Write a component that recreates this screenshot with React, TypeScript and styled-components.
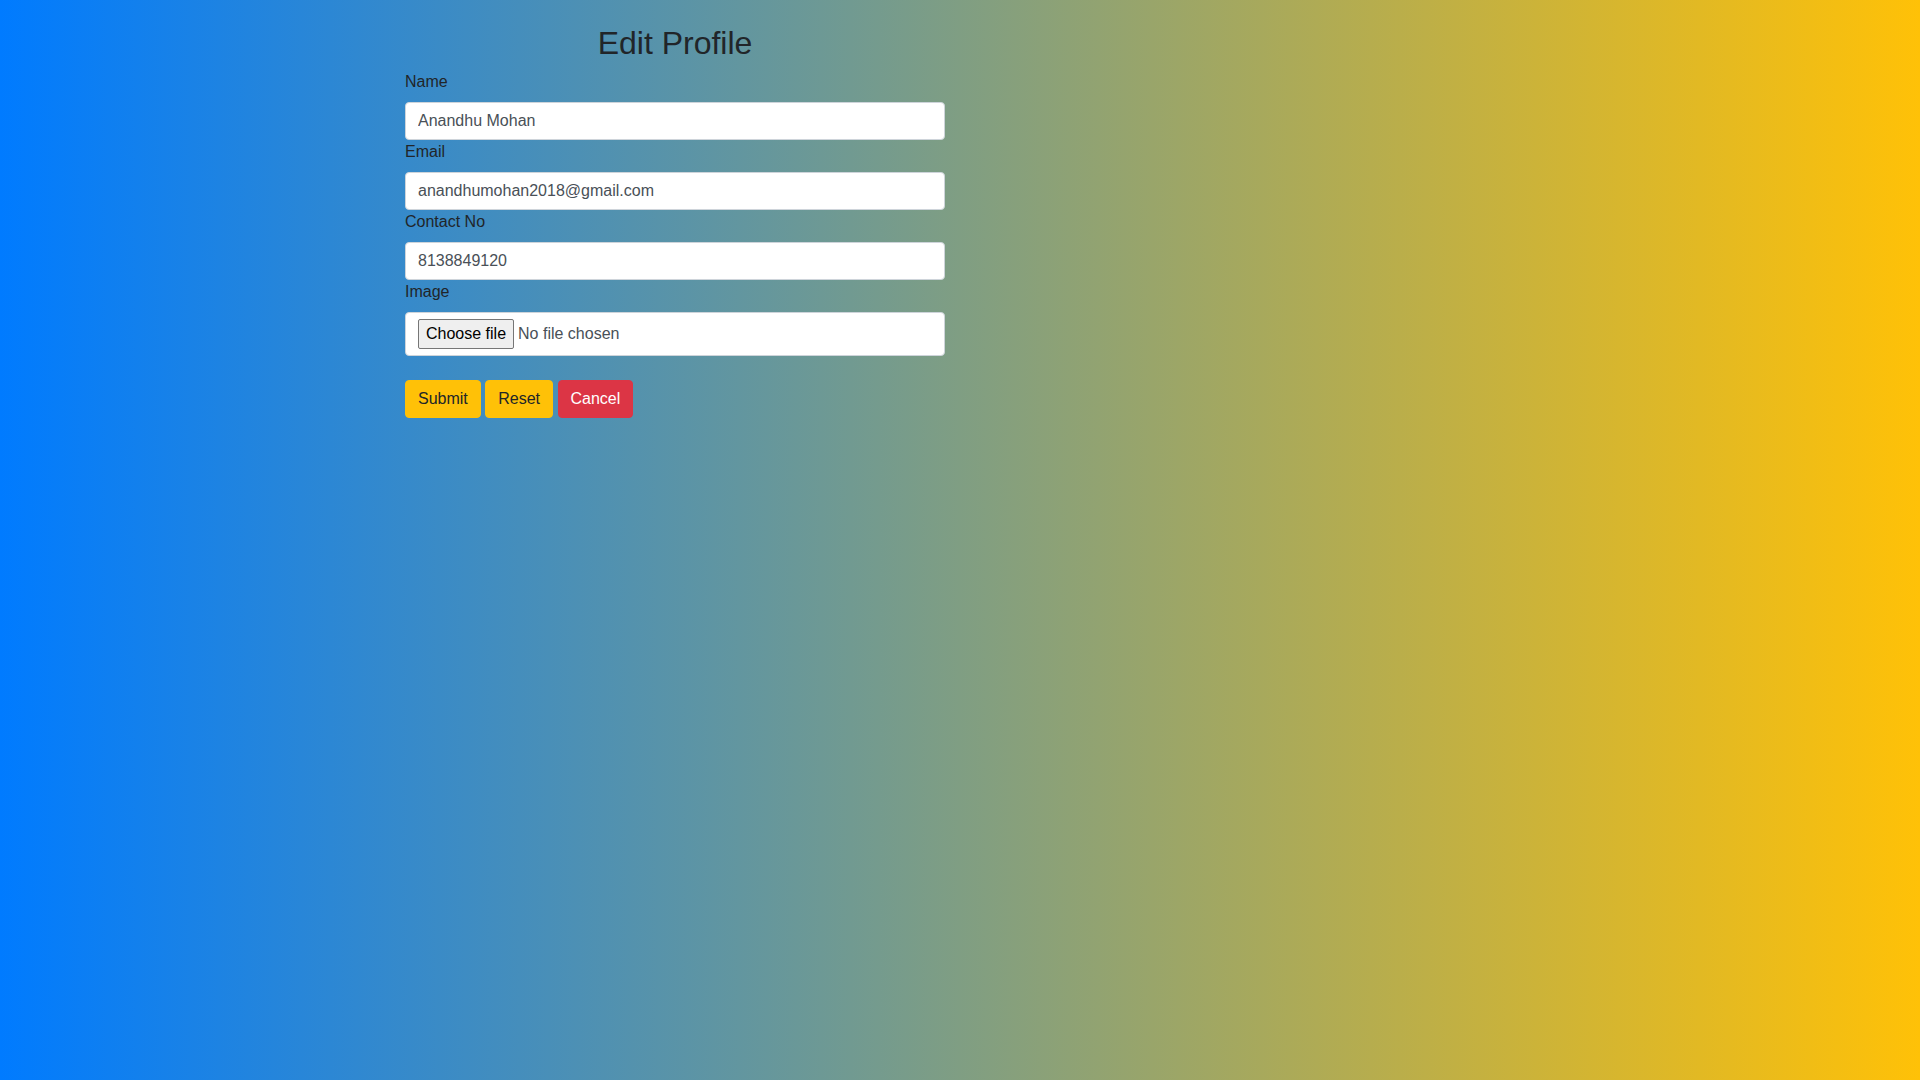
import React, { useState } from "react";
import styled, { createGlobalStyle, css } from "styled-components";

const GlobalStyle = createGlobalStyle`
  *, *::before, *::after { box-sizing: border-box; }
  body {
    margin: 0;
    min-height: 100vh;
    font-family: "Liberation Sans", Arial, sans-serif;
    font-size: 16px;
    line-height: 24px;
    color: #212529;
    background: linear-gradient(to right, #007bff, #ffc107) no-repeat;
  }
`;

const Page = styled.main`
  width: 100%;
  max-width: 1140px;
  margin: 0 auto;
  padding: 24px 15px;
`;

const ProfileForm = styled.form`
  width: 540px;
  max-width: 100%;
`;

const Title = styled.h2`
  margin: 0 0 8px;
  font-size: 32px;
  line-height: 38px;
  font-weight: 500;
  text-align: center;
`;

const Field = styled.div`
  display: flex;
  flex-direction: column;
`;

const Label = styled.label`
  align-self: flex-start;
  margin-bottom: 8px;
`;

const controlStyles = css`
  width: 100%;
  padding: 6px 12px;
  border: 1px solid #ced4da;
  border-radius: 4px;
  background: #fff;
  color: #495057;
  font: inherit;
`;

const TextInput = styled.input`
  ${controlStyles}
`;

const FilePicker = styled.div`
  ${controlStyles}
  position: relative;
  display: flex;
  align-items: center;
  gap: 4px;
`;

/* The native control covers the picker invisibly, so clicks and drops reach it. */
const FileInput = styled.input`
  position: absolute;
  inset: 0;
  width: 100%;
  height: 100%;
  opacity: 0;
`;

const FileButton = styled.span`
  padding: 2px 7px;
  border: 1px solid #767676;
  border-radius: 2px;
  background: #efefef;
  color: #000;

  ${FileInput}:focus-visible ~ & {
    outline: 2px solid #80bdff;
  }
`;

const Actions = styled.div`
  margin-top: 24px;
`;

const Button = styled.button<{ $variant: "warning" | "danger" }>`
  padding: 6px 12px;
  border: 1px solid transparent;
  border-radius: 4px;
  font: inherit;
  cursor: pointer;
  color: ${(p) => (p.$variant === "danger" ? "#fff" : "#212529")};
  background-color: ${(p) => (p.$variant === "danger" ? "#dc3545" : "#ffc107")};
  border-color: ${(p) => (p.$variant === "danger" ? "#dc3545" : "#ffc107")};
`;

const fields = [
  { id: "name", label: "Name", type: "text", value: "Anandhu Mohan" },
  { id: "email", label: "Email", type: "email", value: "anandhumohan2018@gmail.com" },
  { id: "contact", label: "Contact No", type: "tel", value: "8138849120" },
];

export default function App() {
  const [fileName, setFileName] = useState("");

  return (
    <>
      <GlobalStyle />
      <Page>
        <ProfileForm onSubmit={(e) => e.preventDefault()} onReset={() => setFileName("")}>
          <Title>Edit Profile</Title>
          {fields.map((f) => (
            <Field key={f.id}>
              <Label htmlFor={f.id}>{f.label}</Label>
              <TextInput id={f.id} name={f.id} type={f.type} defaultValue={f.value} />
            </Field>
          ))}
          <Field>
            <Label htmlFor="image">Image</Label>
            <FilePicker>
              <FileInput
                id="image"
                name="image"
                type="file"
                onChange={(e) => setFileName(e.target.files?.[0]?.name ?? "")}
              />
              <FileButton>Choose file</FileButton>
              <span>{fileName || "No file chosen"}</span>
            </FilePicker>
          </Field>
          <Actions>
            <Button type="submit" $variant="warning">Submit</Button>{" "}
            <Button type="reset" $variant="warning">Reset</Button>{" "}
            <Button type="button" $variant="danger">Cancel</Button>
          </Actions>
        </ProfileForm>
      </Page>
    </>
  );
}
